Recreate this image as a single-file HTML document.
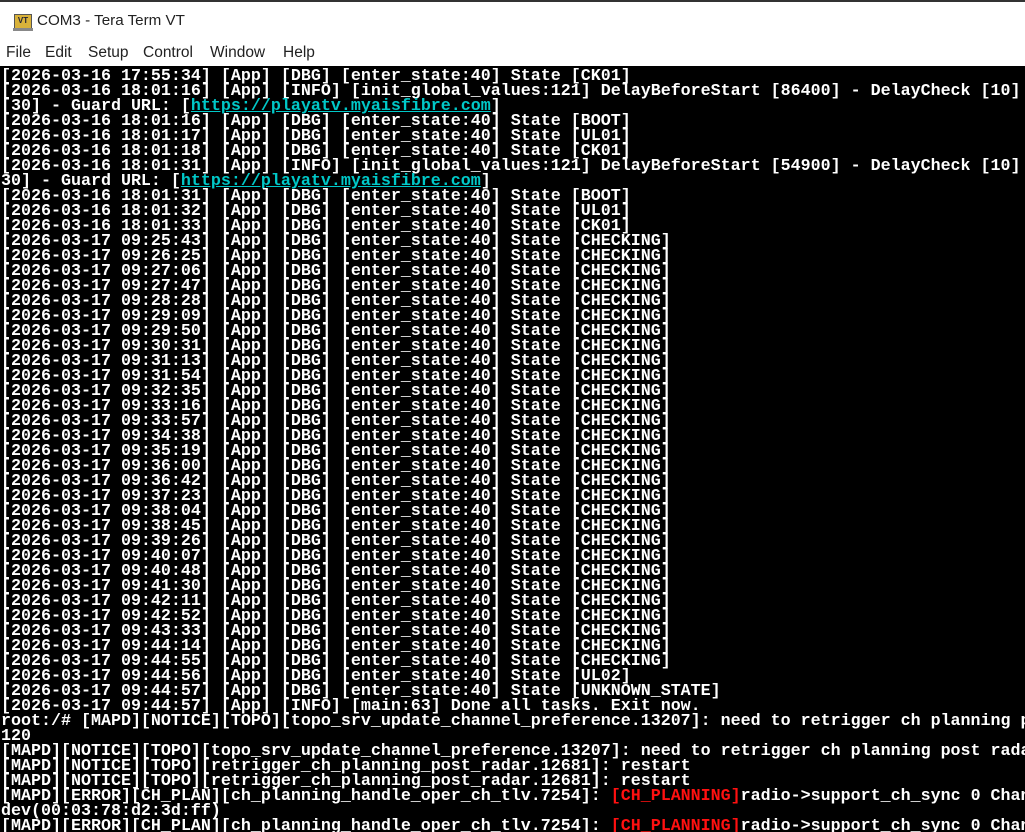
<!DOCTYPE html>
<html><head><meta charset="utf-8"><style>
html,body{margin:0;padding:0;width:1025px;height:832px;overflow:hidden;background:#fff;font-family:"Liberation Sans",sans-serif}
#top{position:absolute;left:0;top:0;width:1025px;height:2px;background:#333}
#title{position:absolute;left:0;top:2px;width:1025px;height:38px;background:#fff}
#icon{position:absolute;left:14px;top:12px;width:16px;height:13px;background:#d9b23a;border:1px solid #555;font:bold 8px "Liberation Sans";color:#223;text-align:center;line-height:11px}
#icon:after{content:"";position:absolute;left:-2px;top:13px;width:20px;height:3px;background:#888}
#ttext{position:absolute;left:37px;top:10px;font-size:15.2px;color:#222}
#menu{position:absolute;left:0;top:40px;width:1025px;height:26px;background:#fff;font-size:15.5px;color:#222}
#menu span{position:absolute;top:4px}
#term{position:absolute;left:0;top:66px;width:1025px;height:766px;background:#000;overflow:hidden}
pre{margin:0;position:absolute;left:1px;top:3px;font:bold 16.67px/15px "Liberation Mono",monospace;color:#fff;white-space:pre}
a{color:#00c8c8;text-decoration:underline}
.r{color:#ff1010}
</style></head><body>
<div id="top"></div>
<div id="title"><div id="icon">VT</div><div id="ttext">COM3 - Tera Term VT</div></div>
<div id="menu"><span style="left:6px">File</span><span style="left:45px">Edit</span><span style="left:88px">Setup</span><span style="left:143px">Control</span><span style="left:210px">Window</span><span style="left:283px">Help</span></div>
<div id="term"><pre>[2026-03-16 17:55:34] [App] [DBG] [enter_state:40] State [CK01]
[2026-03-16 18:01:16] [App] [INFO] [init_global_values:121] DelayBeforeStart [86400] - DelayCheck [10]
[30] - Guard URL: [<a>https://playatv.myaisfibre.com</a>]
[2026-03-16 18:01:16] [App] [DBG] [enter_state:40] State [BOOT]
[2026-03-16 18:01:17] [App] [DBG] [enter_state:40] State [UL01]
[2026-03-16 18:01:18] [App] [DBG] [enter_state:40] State [CK01]
[2026-03-16 18:01:31] [App] [INFO] [init_global_values:121] DelayBeforeStart [54900] - DelayCheck [10]
30] - Guard URL: [<a>https://playatv.myaisfibre.com</a>]
[2026-03-16 18:01:31] [App] [DBG] [enter_state:40] State [BOOT]
[2026-03-16 18:01:32] [App] [DBG] [enter_state:40] State [UL01]
[2026-03-16 18:01:33] [App] [DBG] [enter_state:40] State [CK01]
[2026-03-17 09:25:43] [App] [DBG] [enter_state:40] State [CHECKING]
[2026-03-17 09:26:25] [App] [DBG] [enter_state:40] State [CHECKING]
[2026-03-17 09:27:06] [App] [DBG] [enter_state:40] State [CHECKING]
[2026-03-17 09:27:47] [App] [DBG] [enter_state:40] State [CHECKING]
[2026-03-17 09:28:28] [App] [DBG] [enter_state:40] State [CHECKING]
[2026-03-17 09:29:09] [App] [DBG] [enter_state:40] State [CHECKING]
[2026-03-17 09:29:50] [App] [DBG] [enter_state:40] State [CHECKING]
[2026-03-17 09:30:31] [App] [DBG] [enter_state:40] State [CHECKING]
[2026-03-17 09:31:13] [App] [DBG] [enter_state:40] State [CHECKING]
[2026-03-17 09:31:54] [App] [DBG] [enter_state:40] State [CHECKING]
[2026-03-17 09:32:35] [App] [DBG] [enter_state:40] State [CHECKING]
[2026-03-17 09:33:16] [App] [DBG] [enter_state:40] State [CHECKING]
[2026-03-17 09:33:57] [App] [DBG] [enter_state:40] State [CHECKING]
[2026-03-17 09:34:38] [App] [DBG] [enter_state:40] State [CHECKING]
[2026-03-17 09:35:19] [App] [DBG] [enter_state:40] State [CHECKING]
[2026-03-17 09:36:00] [App] [DBG] [enter_state:40] State [CHECKING]
[2026-03-17 09:36:42] [App] [DBG] [enter_state:40] State [CHECKING]
[2026-03-17 09:37:23] [App] [DBG] [enter_state:40] State [CHECKING]
[2026-03-17 09:38:04] [App] [DBG] [enter_state:40] State [CHECKING]
[2026-03-17 09:38:45] [App] [DBG] [enter_state:40] State [CHECKING]
[2026-03-17 09:39:26] [App] [DBG] [enter_state:40] State [CHECKING]
[2026-03-17 09:40:07] [App] [DBG] [enter_state:40] State [CHECKING]
[2026-03-17 09:40:48] [App] [DBG] [enter_state:40] State [CHECKING]
[2026-03-17 09:41:30] [App] [DBG] [enter_state:40] State [CHECKING]
[2026-03-17 09:42:11] [App] [DBG] [enter_state:40] State [CHECKING]
[2026-03-17 09:42:52] [App] [DBG] [enter_state:40] State [CHECKING]
[2026-03-17 09:43:33] [App] [DBG] [enter_state:40] State [CHECKING]
[2026-03-17 09:44:14] [App] [DBG] [enter_state:40] State [CHECKING]
[2026-03-17 09:44:55] [App] [DBG] [enter_state:40] State [CHECKING]
[2026-03-17 09:44:56] [App] [DBG] [enter_state:40] State [UL02]
[2026-03-17 09:44:57] [App] [DBG] [enter_state:40] State [UNKNOWN_STATE]
[2026-03-17 09:44:57] [App] [INFO] [main:63] Done all tasks. Exit now.
root:/# [MAPD][NOTICE][TOPO][topo_srv_update_channel_preference.13207]: need to retrigger ch planning post radar
120
[MAPD][NOTICE][TOPO][topo_srv_update_channel_preference.13207]: need to retrigger ch planning post radar
[MAPD][NOTICE][TOPO][retrigger_ch_planning_post_radar.12681]: restart
[MAPD][NOTICE][TOPO][retrigger_ch_planning_post_radar.12681]: restart
[MAPD][ERROR][CH_PLAN][ch_planning_handle_oper_ch_tlv.7254]: <span class="r">[CH_PLANNING]</span>radio-&gt;support_ch_sync 0 Channel
dev(00:03:78:d2:3d:ff)
[MAPD][ERROR][CH_PLAN][ch_planning_handle_oper_ch_tlv.7254]: <span class="r">[CH_PLANNING]</span>radio-&gt;support_ch_sync 0 Channel</pre></div>
</body></html>
